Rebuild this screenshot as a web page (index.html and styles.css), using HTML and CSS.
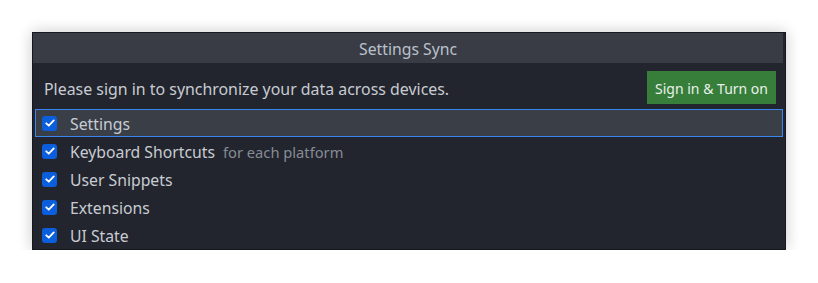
FILE: index.html
```html
<!DOCTYPE html>
<html>
<head>
<meta charset="utf-8">
<link rel="stylesheet" href="styles.css">
</head>
<body>
<div class="panel">
  <div class="title">Settings Sync</div>
  <div class="header">
    <span class="msg">Please sign in to synchronize your data across devices.</span>
    <button class="btn">Sign in &amp; Turn on</button>
  </div>
  <ul class="list">
    <li class="row focused"><span class="cb"><svg viewBox="0 0 16 16" width="12" height="12"><path d="M3 8.4 L6.4 11.6 L13 4.6" fill="none" stroke="#fff" stroke-width="2.4" stroke-linecap="round" stroke-linejoin="round"/></svg></span><span class="label">Settings</span></li>
    <li class="row"><span class="cb"><svg viewBox="0 0 16 16" width="12" height="12"><path d="M3 8.4 L6.4 11.6 L13 4.6" fill="none" stroke="#fff" stroke-width="2.4" stroke-linecap="round" stroke-linejoin="round"/></svg></span><span class="label">Keyboard Shortcuts</span><span class="desc">for each platform</span></li>
    <li class="row"><span class="cb"><svg viewBox="0 0 16 16" width="12" height="12"><path d="M3 8.4 L6.4 11.6 L13 4.6" fill="none" stroke="#fff" stroke-width="2.4" stroke-linecap="round" stroke-linejoin="round"/></svg></span><span class="label">User Snippets</span></li>
    <li class="row"><span class="cb"><svg viewBox="0 0 16 16" width="12" height="12"><path d="M3 8.4 L6.4 11.6 L13 4.6" fill="none" stroke="#fff" stroke-width="2.4" stroke-linecap="round" stroke-linejoin="round"/></svg></span><span class="label">Extensions</span></li>
    <li class="row"><span class="cb"><svg viewBox="0 0 16 16" width="12" height="12"><path d="M3 8.4 L6.4 11.6 L13 4.6" fill="none" stroke="#fff" stroke-width="2.4" stroke-linecap="round" stroke-linejoin="round"/></svg></span><span class="label">UI State</span></li>
  </ul>
</div>
</body>
</html>
```
FILE: styles.css
```css
html, body {
  margin: 0;
  padding: 0;
  background: #ffffff;
}
body {
  padding: 32px 0 0 32px;
  font-family: "Noto Sans", "Open Sans", sans-serif;
}
.panel {
  width: 752px;
  height: 216px;
  border: 1px solid #16181d;
  background: #22252d;
  box-shadow: 0 0 14px rgba(0, 0, 0, 0.22);
  display: flex;
  flex-direction: column;
}
.title {
  height: 30px;
  box-sizing: border-box;
  padding-top: 2px;
  margin-right: 2px;
  background: #393c45;
  color: #b9c1cc;
  font-size: 15.75px;
  line-height: 28px;
  text-align: center;
}
.header {
  display: flex;
  align-items: center;
  justify-content: space-between;
  padding: 8px 9px 5px 11px;
}
.msg {
  padding-top: 2px;
  color: #c8ccd3;
  font-size: 15.9px;
}
.btn {
  height: 33px;
  padding: 2px 8px 0;
  border: none;
  background: #367e3a;
  color: #ecf0ec;
  font-family: inherit;
  font-size: 14px;
}
.list {
  list-style: none;
  margin: 0;
  padding: 0 2px;
}
.row {
  height: 28px;
  box-sizing: border-box;
  display: flex;
  align-items: center;
  padding-left: 6px;
  border: 1px solid transparent;
}
.row.focused {
  background: #393e47;
  border-color: #3a86f0;
}
.cb {
  width: 15px;
  height: 15px;
  border-radius: 3px;
  background: #0b5fdc;
  display: flex;
  align-items: center;
  justify-content: center;
  flex: none;
}
.label {
  padding-top: 2px;
  margin-left: 13px;
  color: #c8ccd3;
  font-size: 15.75px;
}
.desc {
  padding-top: 2px;
  margin-left: 8px;
  color: #868c96;
  font-size: 14.7px;
}
```
